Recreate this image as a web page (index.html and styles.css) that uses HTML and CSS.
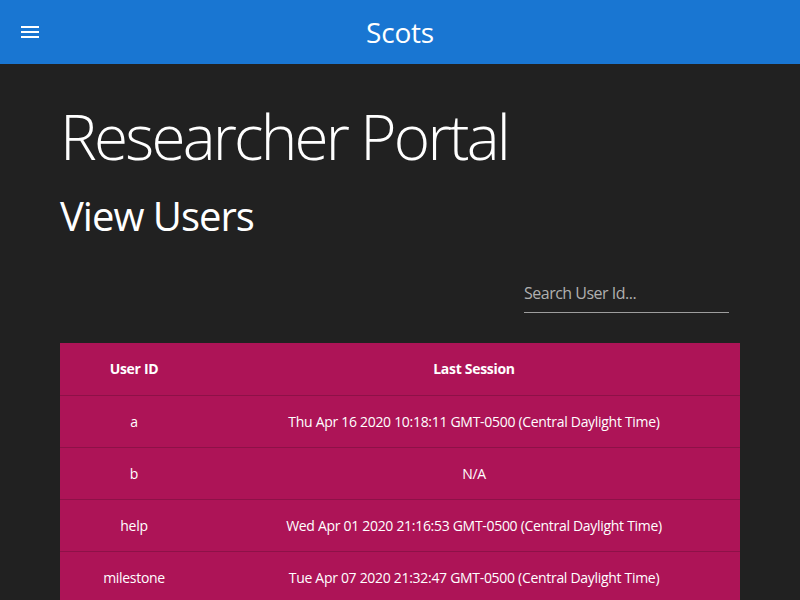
FILE: index.html
```html
<!DOCTYPE html>
<html lang="en">
<head>
<meta charset="utf-8">
<title>Scots - Researcher Portal</title>
<link rel="stylesheet" href="styles.css">
</head>
<body>
<header class="appbar">
  <button class="menu-btn" aria-label="menu">
    <svg viewBox="0 0 24 24" width="24" height="24"><path fill="#fff" d="M3 18h18v-2H3v2zm0-5h18v-2H3v2zm0-7v2h18V6H3z"/></svg>
  </button>
  <div class="app-title">Scots</div>
  <div class="spacer"></div>
</header>
<main class="content">
  <h1 class="page-title">Researcher Portal</h1>
  <h2 class="section-title">View Users</h2>
  <div class="search-row">
    <input class="search-input" type="text" placeholder="Search User Id...">
  </div>
  <table class="users">
    <thead>
      <tr><th class="col-id">User ID</th><th>Last Session</th></tr>
    </thead>
    <tbody>
      <tr><td>a</td><td>Thu Apr 16 2020 10:18:11 GMT-0500 (Central Daylight Time)</td></tr>
      <tr><td>b</td><td>N/A</td></tr>
      <tr><td>help</td><td>Wed Apr 01 2020 21:16:53 GMT-0500 (Central Daylight Time)</td></tr>
      <tr><td>milestone</td><td>Tue Apr 07 2020 21:32:47 GMT-0500 (Central Daylight Time)</td></tr>
    </tbody>
  </table>
</main>
</body>
</html>
```

FILE: styles.css
```css
* { box-sizing: border-box; }
html, body { margin: 0; padding: 0; }
body {
  background: #212121;
  color: #fff;
  font-family: "Open Sans", "Noto Sans", sans-serif;
  overflow: hidden;
  height: 600px;
}
.appbar {
  height: 64px;
  background: #1976d2;
  display: grid;
  grid-template-columns: 1fr auto 1fr;
  align-items: center;
  padding: 0 18px;
}
.menu-btn {
  background: none;
  border: none;
  padding: 0;
  width: 24px;
  height: 24px;
  display: block;
}
.menu-btn svg { display: block; }
.app-title {
  font-size: 28px;
  line-height: 36px;
  color: #fff;
  letter-spacing: -0.2px;
}
.content {
  padding: 0 60px;
}
.page-title {
  margin: 36px 0 0;
  font-size: 62px;
  line-height: 72px;
  font-weight: 350;
  letter-spacing: -2.8px;
}
.section-title {
  margin: 20px 0 0;
  font-size: 40px;
  line-height: 48px;
  font-weight: 400;
  letter-spacing: -1px;
}
.search-row {
  display: flex;
  justify-content: flex-end;
  margin-top: 39px;
  padding-right: 11px;
}
.search-input {
  display: block;
  width: 205px;
  font-family: inherit;
  font-size: 16px;
  line-height: 19px;
  height: 34px;
  padding: 4px 0 10px;
  background: transparent;
  border: none;
  border-bottom: 1px solid #9e9e9e;
  color: #fff;
  outline: none;
  letter-spacing: -0.5px;
}
.search-input::placeholder { color: #b0b0b0; opacity: 1; }
.users {
  margin-top: 30px;
  width: 680px;
  border-collapse: collapse;
  background: #ad1457;
  font-size: 14px;
  letter-spacing: -0.3px;
}
.users th, .users td {
  height: 52px;
  text-align: center;
  border-bottom: 1px solid #8e1148;
  padding: 0 16px;
  color: #fff;
}
.users th { font-weight: 700; }
.users .col-id { width: 148px; }
```
